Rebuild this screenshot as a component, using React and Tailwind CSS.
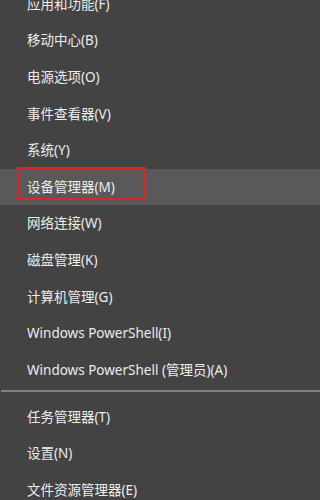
export default function App() {
  const top = [
    '应用和功能(F)',
    '移动中心(B)',
    '电源选项(O)',
    '事件查看器(V)',
    '系统(Y)',
    '设备管理器(M)',
    '网络连接(W)',
    '磁盘管理(K)',
    '计算机管理(G)',
    'Windows PowerShell(I)',
    'Windows PowerShell (管理员)(A)',
  ];
  const bottom = ['任务管理器(T)', '设置(N)', '文件资源管理器(E)'];

  const Item = ({ label, active }) => (
    <div className={`relative flex h-[36.6px] items-center pl-[27px] ${active ? 'bg-[#595959]' : ''}`}>
      {active && (
        <div className="absolute left-[17px] top-[-2px] h-[33px] w-[129px] border-2 border-[#e32222]" />
      )}
      <span className="relative">{label}</span>
    </div>
  );

  return (
    <div
      className="h-[500px] w-full min-w-[303px] overflow-hidden bg-[#434343] text-[13.5px] text-[#ececec]"
      style={{ fontFamily: '"Noto Sans", "Noto Sans CJK SC", sans-serif' }}
    >
      <div className="mt-[-14.4px]">
        {top.map((t, i) => (
          <Item key={t} label={t} active={i === 5} />
        ))}
        <div className="pt-[2px] pb-[7px]">
          <div className="ml-[1px] h-[1.5px] bg-[#808080]" />
        </div>
        {bottom.map(t => (
          <Item key={t} label={t} />
        ))}
      </div>
    </div>
  );
}
